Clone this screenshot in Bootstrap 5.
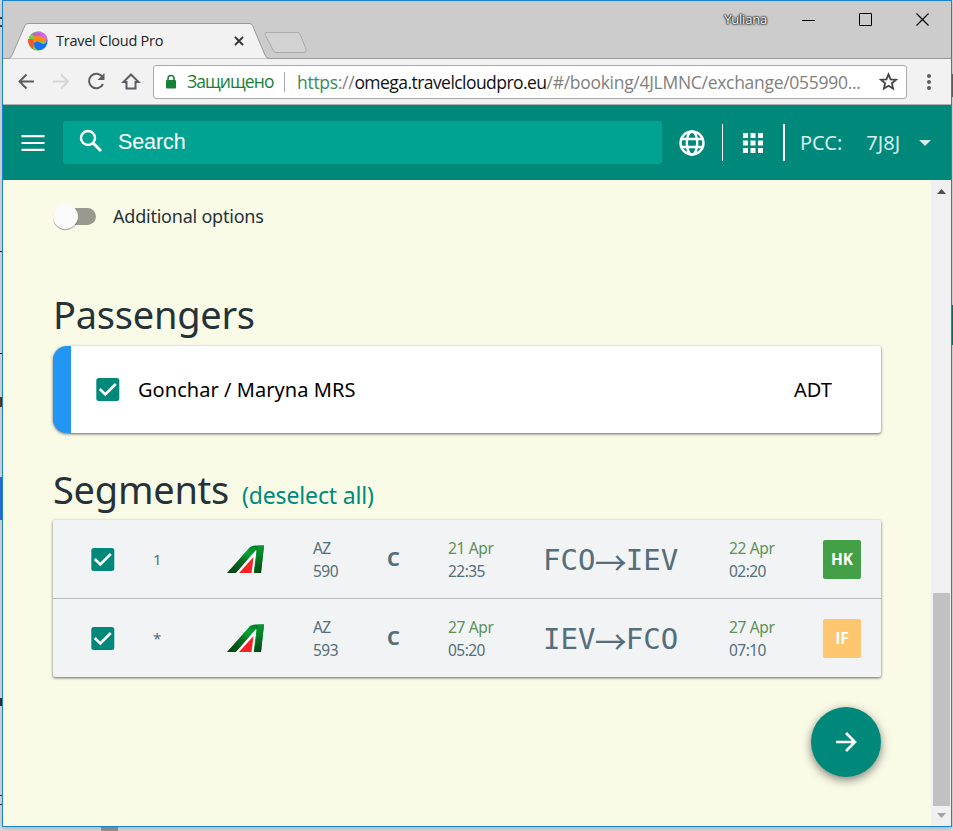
<!DOCTYPE html>
<html lang="en">
<head>
<meta charset="utf-8">
<title>Travel Cloud Pro</title>
<link rel="stylesheet" href="https://cdn.jsdelivr.net/npm/bootstrap@5.3.0/dist/css/bootstrap.min.css">
<style>
body{background:linear-gradient(#2d6fdb,#2d6fdb) 0 477px/2px 43px no-repeat,linear-gradient(#00796b,#00796b) 952px 305px/1px 40px no-repeat,linear-gradient(#666,#666) 952px 74px/1px 23px no-repeat,linear-gradient(#444,#444) 0 17px/2px 2px no-repeat,linear-gradient(#444,#444) 0 25px/2px 2px no-repeat,linear-gradient(#222,#222) 0 251px/2px 1px no-repeat,linear-gradient(#222,#222) 0 353px/2px 1px no-repeat,linear-gradient(#6b3515,#6b3515) 0 397px/2px 10px no-repeat,linear-gradient(#333,#333) 0 698px/2px 8px no-repeat,linear-gradient(#333,#333) 0 795px/2px 1px no-repeat,linear-gradient(#333,#333) 0 804px/2px 1px no-repeat,linear-gradient(#999,#999) 101px 827px/17px 4px no-repeat,#dcdddf;height:831px;overflow:hidden;font-family:"Noto Sans","Open Sans",sans-serif;color:#263238}
svg{display:block;flex:none}
.win{width:950px;height:827px;margin-left:2px;border:1px solid #1883d7;background:#f2f2f2;box-shadow:0 2px 6px rgba(0,0,0,.2)}
.strip{height:58px;background:#ccc;box-shadow:inset 0 -1px #999}
.strip-svg{width:306px;height:58px}
.tabs{width:310px}
.tab-face{padding:18px 0 0 25px;left:0;top:0}
.ui{font-family:"Open Sans",sans-serif;white-space:nowrap}
.tab-title{font-size:14.5px;letter-spacing:-.25px;color:#222;line-height:24px;margin:10px 0 0 8px;width:178px;height:24px}
.fav{margin-top:12px}
.tab-x{margin-top:17px}
.user{font-size:13px;letter-spacing:-.2px;color:#fff;text-shadow:0 0 2px #222,0 0 2px #222,0 0 2px #222,0 0 1px #333;line-height:18px;margin:9px 34px 0 0}
.ctl{padding:11px 21px 0 0;gap:42px}
.bar{height:46px;border-bottom:1px solid #b0b0b0;padding-left:13px}
.omni{width:754px;height:34px;border:1px solid #a9a9a9;border-radius:3px;background:#fff;margin-left:7px;padding-left:11px;font-size:17.500px}
.secure{color:#188038;margin-left:10px;width:97px;letter-spacing:-.92px}
.url{color:#808080;border-left:1px solid #aaa;padding-left:12px;line-height:20px;width:595px;letter-spacing:-.29px}
.url b{font-weight:400;color:#111;letter-spacing:-.55px}
.url i{font-style:normal;color:#3c8a55}
.top{height:75px;background:#00897b;color:#fff;padding-left:18px}
.search{width:599px;height:43px;background:#00a391;border-radius:3px;margin-left:18px;padding-left:16px;font:21.500px "Liberation Sans",Arial,sans-serif}
.search span{margin-left:15px;letter-spacing:-.1px}
.vr1{width:1px;height:37px;background:#fff}
.vr2{width:2px}
.pcc{font-size:20px;color:#d5eeea;letter-spacing:0}
.pcc-l{margin-left:15px}
.pcc-v{margin-left:24px}
.page{height:646px;background:#f9fbe7}
.main{width:928px;padding:20px 50px 0}
.toggle{width:44px;height:32px;overflow:visible}
.opt{font-size:18px;letter-spacing:-.22px;margin-left:16px;line-height:32px}
.ttl{font-size:38px;line-height:50px;margin:0;font-weight:400;color:#263238;letter-spacing:-.25px}
.ttl-p{margin-top:57px}
.sheet{box-shadow:0 1px 3px rgba(0,0,0,.6);width:828px}
.pax{height:87px;margin-top:7px;border-left:18px solid #2196f3;border-radius:14px 3px 3px 14px;background:#fff;color:#000;font-size:20px;padding:0 49px 0 23px}
.pax-n{margin-left:17px;letter-spacing:.05px}
.segh{margin-top:31px}
.desel{font-size:23px;color:#00897b;margin-left:13px;letter-spacing:-.15px}
.segs{background:#f1f3f5;border-radius:2px;color:#546e7a;margin-top:6px}
.seg{height:78px;padding-left:36px}
.seg + .seg{border-top:1px solid #b7babc;height:79px}
.c1{width:64px}.c2{width:74px;font-size:15px;padding-top:1px}.c3{width:86px}.c4{width:74px}.c5{width:61px;font-size:20px;font-weight:700}.c6{width:95px}.c7{width:186px}.c8{width:94px}
.two{font-size:15.500px;line-height:23px;letter-spacing:-.55px;padding-top:1px}
.day{color:#5c9157;letter-spacing:-.35px}
.route{font-family:"DejaVu Sans Mono","Liberation Mono",monospace;font-size:29px;letter-spacing:.1px;line-height:40px;height:39px;white-space:nowrap}
.arr{display:inline-block;font-family:"Noto Sans CJK JP","DejaVu Sans",sans-serif;font-size:32px;letter-spacing:0;margin:0 -1px;line-height:1;height:32px;vertical-align:-5px}
.st{width:38px;height:39px;border-radius:2px;color:#fff;font:700 15.500px/39px "Open Sans",sans-serif;text-align:center}
.hk{background:#43a047}.if{background:#ffc670}
.fab{width:70px;height:70px;border-radius:50%;background:#00897b;margin-top:30px;box-shadow:0 3px 10px rgba(0,0,0,.5)}
.sb{width:20px;background:#f0f0f0;padding:6px 1px 6px 2px}
.thumb{height:213px;background:#c1c1c1}
</style>
<script src="https://cdn.jsdelivr.net/npm/bootstrap@5.3.0/dist/js/bootstrap.bundle.min.js"></script>
</head>
<body>
<svg width="0" height="0" class="position-absolute">
<defs>
<linearGradient id="gr" x1="1" y1="0" x2="0" y2="1"><stop offset="0" stop-color="#006b23"/><stop offset=".35" stop-color="#06a233"/><stop offset=".6" stop-color="#0a6a22"/><stop offset="1" stop-color="#013d0c"/></linearGradient>
<linearGradient id="gv" x1="0" y1="0" x2="0" y2="1"><stop offset="0" stop-color="#0a9a34"/><stop offset="1" stop-color="#014a12"/></linearGradient>
</defs>
<symbol id="chk" viewBox="0 0 27 27"><rect x="2.300" y="2" width="23" height="23" rx="2.5" fill="#00897b"/><path d="M5.800 13l5.500 5.500 10.500-10.500" fill="none" stroke="#fff" stroke-width="2.600"/></symbol>
<symbol id="az" viewBox="0 0 38 29"><path d="M0 28L23 2Q25 .5 28 .5H37L34 28H26.500L29 5 9 28z" fill="url(#gr)"/><path d="M31 .5H37L34 28H27.500z" fill="url(#gv)"/><path d="M9 28.500L29.500 5 26.500 28.500z" fill="#fff"/><path d="M12 28L26.500 12 24.500 28z" fill="#f9201f"/></symbol>
</svg>
<div class="win">
  <div class="strip d-flex">
    <div class="tabs position-relative">
      <svg class="strip-svg" viewBox="0 0 306 58"><path d="M0 57.500H6Q8 57 9 54L22 24.500Q23 22.500 25 22.500H247Q248.500 22.500 249.500 24.500L262 54Q263.500 57.500 266 57.500H306" fill="#f2f2f2" stroke="#999"/><path d="M263 31.500H294Q296 31.500 297 33L303 48Q304 51.500 301 51.500H273Q271 51.500 270 49L262 33.500Q261.500 31.500 263 31.500z" fill="#d2d2d2" stroke="#aaa"/></svg>
      <div class="tab-face position-absolute d-flex ui">
        <svg class="fav" width="20" height="20" viewBox="0 0 20 20"><circle cx="10" cy="10" r="9.800" fill="#6fd34a"/><path d="M10 .2A9.800 9.800 0 0 1 19.800 10L10 10z" fill="#d86be8"/><path d="M4 3Q9-1 14 4L9 8z" fill="#c65be0"/><path d="M0 8Q-.5 14 5 18L7 8z" fill="#f5562a"/><path d="M5 9Q6 3 11 5T18 6Q18 11 13 11T7 13z" fill="#ff8a12"/><path d="M6 12Q9 9 13 12T19 9Q20 16 13 19 6 20 6 12z" fill="#176ef4"/></svg>
        <div class="tab-title">Travel Cloud Pro</div>
        <svg class="tab-x" width="10" height="10" viewBox="0 0 10 10"><path d="M1 1l8 8M9 1l-8 8" stroke="#333" stroke-width="1.800"/></svg>
      </div>
    </div>
    <div class="user ui ms-auto">Yuliana</div>
    <div class="ctl d-flex">
      <svg width="15" height="15"><path d="M1 8.500h13" stroke="#000"/></svg>
      <svg width="15" height="15"><path d="M1.500 1.500h12v12h-12z" fill="none" stroke="#000"/></svg>
      <svg width="15" height="15"><path d="M1.500 1.500l12 12m0-12l-12 12" stroke="#000" stroke-width="1.200"/></svg>
    </div>
  </div>
  <div class="bar d-flex align-items-center ui">
    <svg width="130" height="24" viewBox="0 0 130 24" fill="none" stroke="#5a5d61" stroke-width="2"><path d="M18 11.500H3.500M10.500 4.500l-7 7 7 7"/><path stroke="#d4d6d8" d="M37 11.500H51.500M45 4.500l7 7-7 7"/><path d="M86.500 7A7.300 7.300 0 1 0 87 14"/><path d="M88.500 3v7h-7z" fill="#5a5d61" stroke="none"/><path d="M107.500 12l7.500-7.500 7.500 7.500H119.500v6.500h-9V12z"/></svg>
    <div class="omni d-flex align-items-center">
      <svg width="12" height="16" viewBox="0 0 12 16"><rect x="1" y="6" width="10" height="8.500" rx="1" fill="#188038"/><path d="M3 7V4.500a3 3 0 0 1 6 0V7" fill="none" stroke="#188038" stroke-width="1.600"/></svg>
      <span class="secure">Защищено</span>
      <span class="url"><i>https</i>://<b>omega.travelcloudpro.eu</b>/#/booking/4JLMNC/exchange/055990...</span>
      <svg width="19" height="19" viewBox="0 0 20 20"><path d="M10 2.500l2.200 5.200 5.600.5-4.200 3.700 1.200 5.500-4.800-2.900-4.800 2.900 1.200-5.500-4.200-3.700 5.600-.5z" fill="none" stroke="#444" stroke-width="1.900"/></svg>
    </div>
    <svg class="ms-3" width="12" height="20" fill="#5a5d61"><circle cx="6" cy="4" r="2"/><circle cx="6" cy="10" r="2"/><circle cx="6" cy="16" r="2"/></svg>
  </div>
  <div class="top d-flex align-items-center">
    <svg width="24" height="20" viewBox="0 0 24 20"><path d="M.5 3.200h23M.5 10h23M.5 16.800h23" stroke="#fff" stroke-width="2.200"/></svg>
    <div class="search d-flex align-items-center">
      <svg class="mb-1" width="24" height="24" viewBox="0 0 24 24" fill="none" stroke="#fff" stroke-width="2.400"><circle cx="9" cy="9" r="7"/><path d="M14 14l8 8" stroke-width="3"/></svg>
      <span>Search</span>
    </div>
    <svg width="60" height="26" viewBox="0 0 60 26" fill="none" stroke="#fff" stroke-width="2.400"><circle cx="30" cy="13" r="11.500"/><ellipse cx="30" cy="13" rx="5.200" ry="11.500"/><path d="M19.500 9h21M19.500 17h21"/></svg>
    <div class="vr1"></div>
    <svg width="60" height="22" viewBox="0 0 60 22" fill="#fff"><path d="M20 1h5v5h-5zM27.500 1h5v5h-5zM35 1h5v5h-5zM20 8.500h5v5h-5zM27.500 8.500h5v5h-5zM35 8.500h5v5h-5zM20 16h5v5h-5zM27.500 16h5v5h-5zM35 16h5v5h-5z"/></svg>
    <div class="vr1 vr2"></div>
    <span class="pcc pcc-l">PCC:</span><span class="pcc pcc-v">7J8J</span>
    <svg class="ms-3" width="16" height="8" viewBox="0 0 16 8"><path d="M3 1h12L9 7z" fill="#d5eeea"/></svg>
  </div>
  <div class="page d-flex">
    <div class="main">
      <div class="d-flex">
        <svg class="toggle" viewBox="0 0 44 32"><rect x="10" y="8" width="33" height="17" rx="8.500" fill="#99998d"/><circle cx="12.500" cy="17.700" r="12.500" fill="#000" opacity=".3"/><circle cx="12.500" cy="16.500" r="12.500" fill="#fafafa"/></svg>
        <span class="opt">Additional options</span>
      </div>
      <h1 class="ttl ttl-p">Passengers</h1>
      <div class="pax sheet d-flex align-items-center">
        <svg width="27" height="27"><use href="#chk"/></svg>
        <span class="pax-n">Gonchar / Maryna MRS</span><span class="ms-auto">ADT</span>
      </div>
      <div class="segh d-flex align-items-baseline"><h1 class="ttl">Segments</h1><span class="desel">(deselect all)</span></div>
      <div class="segs sheet">
        <div class="seg d-flex align-items-center">
          <div class="c1"><svg width="27" height="27"><use href="#chk"/></svg></div><div class="c2">1</div>
          <div class="c3"><svg width="38" height="29"><use href="#az"/></svg></div>
          <div class="c4 two">AZ<br>590</div><div class="c5">C</div>
          <div class="c6 two"><span class="day">21 Apr</span><br>22:35</div>
          <div class="c7 route">FCO<span class="arr">→</span>IEV</div>
          <div class="c8 two"><span class="day">22 Apr</span><br>02:20</div>
          <div class="st hk">HK</div>
        </div>
        <div class="seg d-flex align-items-center">
          <div class="c1"><svg width="27" height="27"><use href="#chk"/></svg></div><div class="c2">*</div>
          <div class="c3"><svg width="38" height="29"><use href="#az"/></svg></div>
          <div class="c4 two">AZ<br>593</div><div class="c5">C</div>
          <div class="c6 two"><span class="day">27 Apr</span><br>05:20</div>
          <div class="c7 route">IEV<span class="arr">→</span>FCO</div>
          <div class="c8 two"><span class="day">27 Apr</span><br>07:10</div>
          <div class="st if">IF</div>
        </div>
      </div>
      <div class="fab ms-auto d-flex align-items-center justify-content-center"><svg width="22" height="22" viewBox="0 0 22 22"><path d="M1 11h18M11 2l9 9-9 9" fill="none" stroke="#fff" stroke-width="2.600"/></svg></div>
    </div>
    <div class="sb d-flex flex-column align-items-center">
      <svg width="17" height="10"><path d="M4 8h9L8.500 3z" fill="#505050"/></svg>
      <div class="thumb w-100 mt-auto"></div>
      <svg width="17" height="14"><path d="M4 7h9l-4.500 5z" fill="#a3a3a3"/></svg>
    </div>
  </div>
</div>
</body>
</html>
